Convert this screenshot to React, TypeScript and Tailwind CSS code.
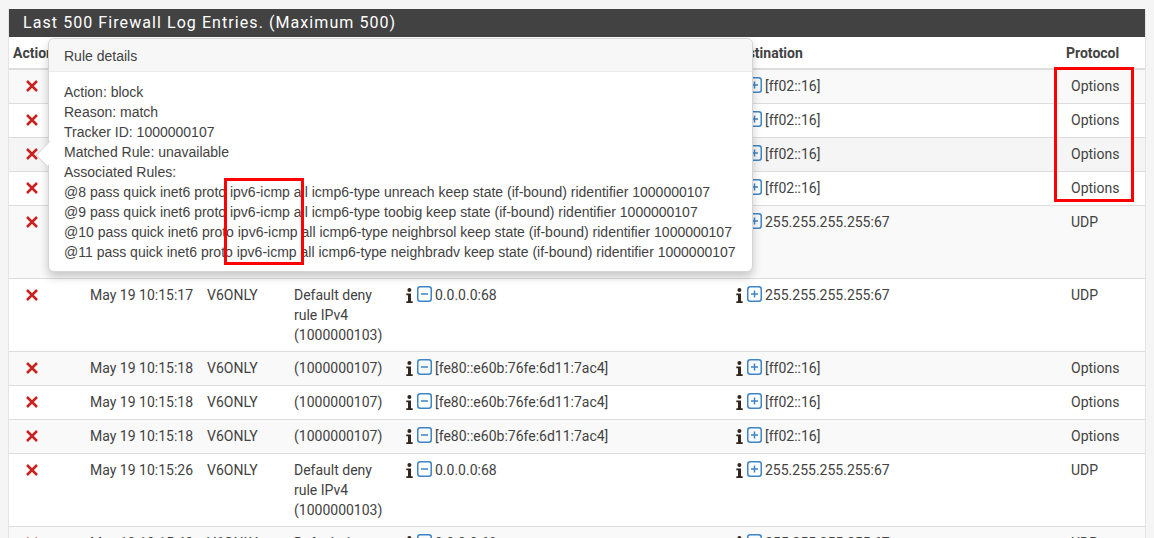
type Row = {
  time: string
  rule: string[]
  src: string
  dst: string
  proto: string
}

const ip6 = '[fe80::e60b:76fe:6d11:7ac4]'
const deny = ['Default deny', 'rule IPv4', '(1000000103)']

const ROWS: Row[] = [
  { time: 'May 19 10:15:12', rule: ['(1000000107)'], src: ip6, dst: '[ff02::16]', proto: 'Options' },
  { time: 'May 19 10:15:12', rule: ['(1000000107)'], src: ip6, dst: '[ff02::16]', proto: 'Options' },
  { time: 'May 19 10:15:12', rule: ['(1000000107)'], src: ip6, dst: '[ff02::16]', proto: 'Options' },
  { time: 'May 19 10:15:12', rule: ['(1000000107)'], src: ip6, dst: '[ff02::16]', proto: 'Options' },
  { time: 'May 19 10:15:13', rule: deny, src: '0.0.0.0:68', dst: '255.255.255.255:67', proto: 'UDP' },
  { time: 'May 19 10:15:17', rule: deny, src: '0.0.0.0:68', dst: '255.255.255.255:67', proto: 'UDP' },
  { time: 'May 19 10:15:18', rule: ['(1000000107)'], src: ip6, dst: '[ff02::16]', proto: 'Options' },
  { time: 'May 19 10:15:18', rule: ['(1000000107)'], src: ip6, dst: '[ff02::16]', proto: 'Options' },
  { time: 'May 19 10:15:18', rule: ['(1000000107)'], src: ip6, dst: '[ff02::16]', proto: 'Options' },
  { time: 'May 19 10:15:26', rule: deny, src: '0.0.0.0:68', dst: '255.255.255.255:67', proto: 'UDP' },
  { time: 'May 19 10:15:43', rule: deny, src: '0.0.0.0:68', dst: '255.255.255.255:67', proto: 'UDP' },
]

const RULES = [
  '@8 pass quick inet6 proto ipv6-icmp all icmp6-type unreach keep state (if-bound) ridentifier 1000000107',
  '@9 pass quick inet6 proto ipv6-icmp all icmp6-type toobig keep state (if-bound) ridentifier 1000000107',
  '@10 pass quick inet6 proto ipv6-icmp all icmp6-type neighbrsol keep state (if-bound) ridentifier 1000000107',
  '@11 pass quick inet6 proto ipv6-icmp all icmp6-type neighbradv keep state (if-bound) ridentifier 1000000107',
]

function rowBg(i: number) {
  if (i === 2) return 'bg-[#f5f5f5]'
  return i % 2 === 0 ? 'bg-[#f9f9f9]' : 'bg-white'
}

function BlockIcon() {
  return (
    <svg viewBox="0 0 12 12" className="w-[12px] h-[12px] mt-[4px]" fill="none" stroke="#c9211e" strokeWidth="2.5">
      <path d="M1 1 L11 11 M11 1 L1 11" />
    </svg>
  )
}

function InfoIcon() {
  return (
    <svg viewBox="0 0 7 15" className="w-[7px] h-[15px] mt-[3px] ml-[1px] shrink-0" fill="#33261d">
      <circle cx="3.4" cy="2" r="2" />
      <path d="M0.3 5.5 H5 V13.2 H6.7 V15 H0.3 V13.2 H2 V7.3 H0.3 Z" />
    </svg>
  )
}

function BoxIcon({ minus }: { minus?: boolean }) {
  return (
    <svg viewBox="0 0 15 16" className="w-[15px] h-[16px] ml-[4px] mt-[1px] shrink-0" fill="none" stroke="#3d85c6" strokeWidth="1.5">
      <rect x="0.75" y="0.75" width="13.5" height="14.5" rx="2.5" />
      <path d={minus ? 'M4 8 H11' : 'M4 8 H11 M7.5 4.5 V11.5'} />
    </svg>
  )
}

function Address({ text, minus }: { text: string; minus?: boolean }) {
  return (
    <div className="flex items-start">
      <InfoIcon />
      <BoxIcon minus={minus} />
      <span className="ml-[3px] whitespace-nowrap">{text}</span>
    </div>
  )
}

export default function App() {
  return (
    <div className="relative h-[538px] overflow-hidden bg-[#f5f5f5] px-2 pt-[9px] font-['Roboto',sans-serif] text-[14px] leading-[20px] text-[#424242]">
      <div className="border border-t-0 border-[#e4e4e4] bg-white">
        <h2 className="h-[28px] bg-[#424242] pl-[14px] text-[16px] leading-[28px] font-normal tracking-[1.07px] text-white">
          Last 500 Firewall Log Entries. (Maximum 500)
        </h2>
        <table className="w-full table-fixed border-collapse">
          <colgroup>
            <col className="w-[76px]" />
            <col className="w-[117px]" />
            <col className="w-[87px]" />
            <col className="w-[111px]" />
            <col className="w-[330px]" />
            <col className="w-[336px]" />
            <col />
          </colgroup>
          <thead>
            <tr className="border-b-2 border-[#dddddd] text-left">
              <th className="h-[32px] pl-[4px] font-bold">Action</th>
              <th className="pl-[5px] font-bold">Time</th>
              <th className="pl-[5px] font-bold">Interface</th>
              <th className="pl-[5px] font-bold">Rule</th>
              <th className="pl-[5px] font-bold">Source</th>
              <th className="pl-[1px] font-bold">Destination</th>
              <th className="pl-0 font-bold">Protocol</th>
            </tr>
          </thead>
          <tbody>
            {ROWS.map((r, i) => (
              <tr key={i} className={`border-b border-[#dddddd] align-top ${rowBg(i)}`}>
                <td className="h-[34px] py-[6px] pl-[17px]">
                  <BlockIcon />
                </td>
                <td className="py-[6px] pl-[5px] whitespace-nowrap">{r.time}</td>
                <td className="py-[6px] pl-[5px]">V6ONLY</td>
                <td className="py-[6px] pl-[5px]">
                  {r.rule.map((line) => (
                    <div key={line}>{line}</div>
                  ))}
                </td>
                <td className="py-[6px] pl-[5px]">
                  <Address text={r.src} minus />
                </td>
                <td className="py-[6px] pl-[5px]">
                  <Address text={r.dst} />
                </td>
                <td className="py-[6px] pl-[5px]">{r.proto}</td>
              </tr>
            ))}
          </tbody>
        </table>
      </div>

      {/* popover over the table */}
      <div className="absolute left-[48px] top-[38px] w-[705px] h-[234px] rounded-[6px] border border-[#d4d4d4] bg-white shadow-[0_5px_10px_rgba(0,0,0,0.2)]">
        <div className="h-[33px] rounded-t-[6px] border-b border-[#ebebeb] bg-[#f7f7f7] pl-[15px] leading-[34px] font-['Liberation_Sans',sans-serif]">
          Rule details
        </div>
        <div className="pl-[15px] pt-[10px] whitespace-nowrap font-['Liberation_Sans',sans-serif]">
          <div>Action: block</div>
          <div>Reason: match</div>
          <div>Tracker ID: 1000000107</div>
          <div>Matched Rule: unavailable</div>
          <div>Associated Rules:</div>
          {RULES.map((rule) => (
            <div key={rule}>{rule}</div>
          ))}
        </div>
        <div className="absolute left-[-11px] top-[104px] h-[21px] w-[21px] rotate-45 scale-x-75 origin-center border-b border-l border-[#d4d4d4] bg-white" />
      </div>

      {/* red annotation boxes */}
      <div className="absolute left-[1054px] top-[67px] h-[135px] w-[80px] border-[3px] border-[#ff0000]" />
      <div className="absolute left-[224px] top-[178px] h-[87px] w-[80px] border-[3px] border-[#ff0000]" />
    </div>
  )
}
